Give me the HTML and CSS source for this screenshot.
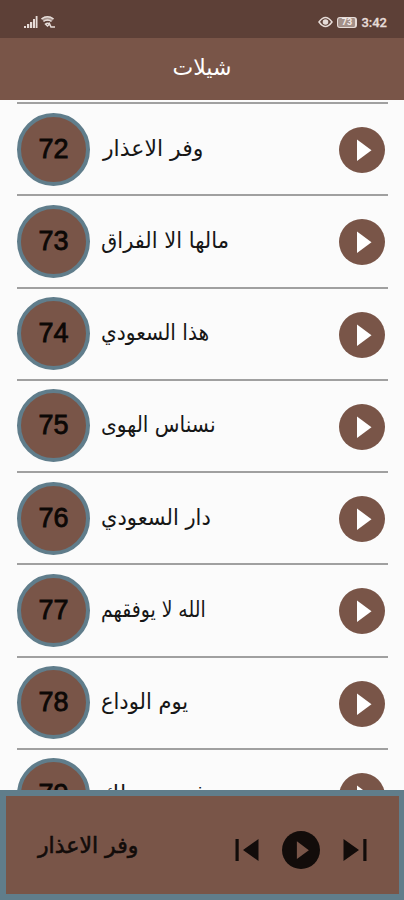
FILE: index.html
```
<!DOCTYPE html>
<html lang="ar">
<head>
    <meta charset="UTF-8">
    <meta name="viewport" content="width=device-width, initial-scale=1.0">
    <title>شيلات</title>
    <link rel="stylesheet" href="styles.css">
</head>
<body>

<!-- Shared icons -->
<svg class="sprite">
    <symbol id="play" viewBox="0 0 46 46">
        <circle cx="23" cy="23" r="23"/>
        <path d="M18 12.500v21.500l14.500-10.700z" fill="var(--tri)"/>
    </symbol>
</svg>

<div class="status-bar">
    <svg width="32" height="14" viewBox="0 0 32 14">
        <path d="M0 13v-2h2v2zM3 13V9h2.200v4zM6 13V7h2.200v6zM9 13V4h2v9zM11.700 13V1h1.800v12z"/>
        <path class="wave" d="M17.500 4q6-4.500 12 0M19.500 6.500q4-3 8 0"/>
        <path d="M17 3.500q6.500-4.500 13 0L28 6h-8.500z" opacity=".55"/>
        <path class="wave" d="M21.500 9q2-1.500 4 0l-2 2zM25 7.500l2 4.500h4"/>
    </svg>
    <div class="status-right">
        <svg width="15" height="12" viewBox="0 0 15 12">
            <path class="wave" d="M1 6q6.500-9 13 0q-6.500 9-13 0z"/>
            <circle cx="7.500" cy="6" r="2.800"/>
        </svg>
        <span class="battery">73</span>
        <span class="clock">3:42</span>
    </div>
</div>

<header class="title-bar">شيلات</header>

<main class="list">
    <div class="row">
        <span class="number">72</span>
        <span class="name indent" dir="rtl">وفر الاعذار</span>
        <svg class="play"><use href="#play"/></svg>
    </div>
    <div class="row">
        <span class="number">73</span>
        <span class="name snug" dir="rtl">مالها الا الفراق</span>
        <svg class="play"><use href="#play"/></svg>
    </div>
    <div class="row">
        <span class="number">74</span>
        <span class="name narrow" dir="rtl">هذا السعودي</span>
        <svg class="play"><use href="#play"/></svg>
    </div>
    <div class="row">
        <span class="number">75</span>
        <span class="name narrow" dir="rtl">نسناس الهوى</span>
        <svg class="play"><use href="#play"/></svg>
    </div>
    <div class="row">
        <span class="number">76</span>
        <span class="name snug" dir="rtl">دار السعودي</span>
        <svg class="play"><use href="#play"/></svg>
    </div>
    <div class="row">
        <span class="number">77</span>
        <span class="name tight" dir="rtl">الله لا يوفقهم</span>
        <svg class="play"><use href="#play"/></svg>
    </div>
    <div class="row">
        <span class="number">78</span>
        <span class="name snug" dir="rtl">يوم الوداع</span>
        <svg class="play"><use href="#play"/></svg>
    </div>
    <div class="row">
        <span class="number">79</span>
        <span class="name" dir="rtl">فيني وصلك</span>
        <svg class="play"><use href="#play"/></svg>
    </div>
</main>

<!-- Player -->
<footer class="player">
    <span class="track" dir="rtl">وفر الاعذار</span>
    <div class="controls">
        <svg width="24" height="24" viewBox="0 0 24 24"><path d="M.5 1h3.200v22H.5zM23.500 1v22L8 12z"/></svg>
        <svg class="play-current"><use href="#play"/></svg>
        <svg width="24" height="24" viewBox="0 0 24 24"><path d="M20.300 1h3.200v22h-3.200zM.5 1v22L16 12z"/></svg>
    </div>
</footer>

</body>
</html>
```
FILE: styles.css
```
body {
    margin: 0;
    height: 900px;
    display: flex;
    flex-direction: column;
    overflow: hidden;
    background-color: #fbfbfb;
    color: #161616;
    font-family: "DejaVu Sans", sans-serif;
}

.sprite {
    position: absolute;
    width: 0;
    height: 0;
}

.status-bar {
    height: 38px;
    flex: none;
    box-sizing: border-box;
    padding: 6px 17px 0 24px;
    display: flex;
    align-items: center;
    justify-content: space-between;
    background-color: #5d4037;
    color: #e6dcd8;
    fill: #e6dcd8;
}

.wave {
    fill: none;
    stroke: #e6dcd8;
    stroke-width: 1.5;
}

.status-right {
    display: flex;
    align-items: center;
    gap: 4px;
}

.battery {
    width: 17px;
    height: 9px;
    border: 1.5px solid #e6dcd8;
    border-right-width: 2.5px;
    border-radius: 3px;
    background-color: #a39089;
    color: #f3ebe8;
    font: bold 9px/9px Roboto, sans-serif;
    text-align: center;
}

.clock {
    font: 500 13px Roboto, sans-serif;
    -webkit-text-stroke: 0.3px #e6dcd8;
}

.title-bar {
    height: 62px;
    flex: none;
    background-color: #795548;
    color: #fff;
    font-size: 22px;
    line-height: 60px;
    text-align: center;
}

.list {
    flex: 1;
    min-height: 0;
    overflow: hidden;
    padding: 2px 16px 0 17px;
}

.row {
    height: 92.25px;
    box-sizing: border-box;
    border-top: 2px solid #a0a0a0;
    display: flex;
    align-items: center;
}

.number {
    width: 73px;
    height: 73px;
    box-sizing: border-box;
    border: 4px solid #607d8b;
    border-radius: 50%;
    background-color: #795548;
    color: #0c0806;
    font: 27px/65px "Liberation Sans", sans-serif;
    -webkit-text-stroke: 0.8px #0c0806;
    text-align: center;
}

.name {
    margin-left: 11px;
    padding-bottom: 2px;
    font-size: 22px;
    white-space: nowrap;
    transform-origin: left;
}

.indent {
    margin-left: 13px;
}

.snug {
    transform: scaleX(0.955);
}

.narrow {
    transform: scaleX(0.92);
}

.tight {
    transform: scaleX(0.855);
}

.play {
    width: 46px;
    height: 46px;
    margin-left: auto;
    margin-right: 3px;
    padding-top: 2px;
    fill: #795548;
    --tri: #fff;
}

.player {
    height: 110px;
    flex: none;
    box-sizing: border-box;
    border: 5px solid #607d8b;
    border-width: 6px 5px 6px 6px;
    background-color: #795548;
    padding: 0 32px 0 32px;
    display: flex;
    align-items: center;
    justify-content: space-between;
    color: #120c0a;
}

.track {
    font-size: 22px;
    -webkit-text-stroke: 0.6px #120c0a;
}

.controls {
    display: flex;
    align-items: center;
    gap: 23px;
    padding-top: 9px;
    fill: #120c0a;
}

.play-current {
    width: 38px;
    height: 38px;
    --tri: #795548;
}
```
